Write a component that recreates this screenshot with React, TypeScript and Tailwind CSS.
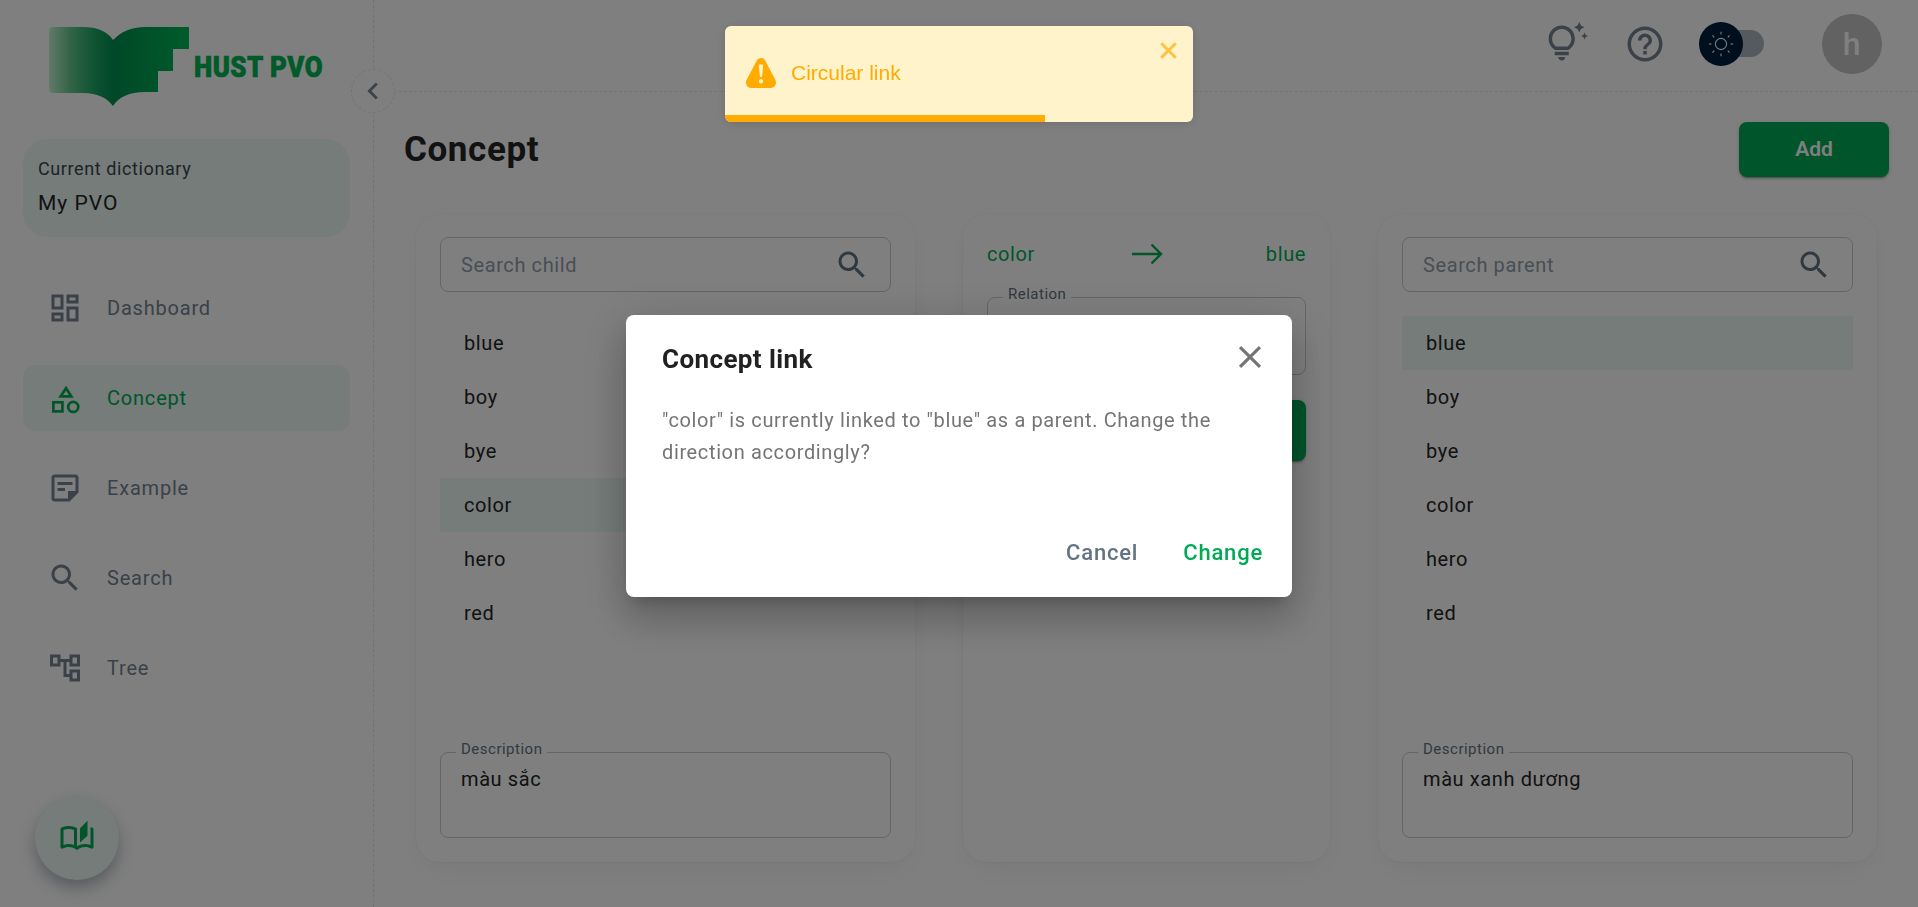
import type { ReactNode } from 'react'

const ICONS = {
  dashboard: 'M19 5v2h-4V5h4M9 5v6H5V5h4m10 8v6h-4v-6h4M9 17v2H5v-2h4M21 3h-8v6h8V3zM11 3H3v10h8V3zm10 8h-8v10h8V11zm-10 4H3v6h8v-6z',
  note: 'M19 5v9l-5 0 0 5H5V5H19 M19 3H5C3.9 3 3 3.9 3 5v14c0 1.1.9 2 2 2h10l6-6V5C21 3.9 20.1 3 19 3z M12 14H7v-2h5V14z M17 10H7V8h10V10z',
  search: 'M15.5 14h-.79l-.28-.27C15.41 12.59 16 11.11 16 9.5 16 5.91 13.09 3 9.5 3S3 5.91 3 9.5 5.91 16 9.5 16c1.61 0 3.09-.59 4.23-1.57l.27.28v.79l5 4.99L20.49 19l-4.99-5zm-6 0C7.01 14 5 11.99 5 9.5S7.01 5 9.5 5 14 7.01 14 9.5 11.99 14 9.5 14z',
  tree: 'M22 11V3h-7v3H9V3H2v8h7V8h2v10h4v3h7v-8h-7v3h-2V8h2v3h7zM7 9H4V5h3v4zm10 6h3v4h-3v-4zm0-10h3v4h-3V5z',
  close: 'M19 6.41 17.59 5 12 10.59 6.41 5 5 6.41 10.59 12 5 17.59 6.41 19 12 13.41 17.59 19 19 17.59 13.41 12z',
  chevron: 'M15.41 7.41 14 6l-6 6 6 6 1.41-1.41L10.83 12z',
  help: 'M11 18h2v-2h-2v2zm1-16C6.48 2 2 6.48 2 12s4.48 10 10 10 10-4.48 10-10S17.52 2 12 2zm0 18c-4.41 0-8-3.59-8-8s3.59-8 8-8 8 3.59 8 8-3.59 8-8 8zm0-14c-2.21 0-4 1.79-4 4h2c0-1.1.9-2 2-2s2 .9 2 2c0 2-3 1.75-3 5h2c0-2.25 3-2.5 3-5 0-2.21-1.79-4-4-4z',
  tips: 'M7 20h4c0 1.1-.9 2-2 2s-2-.9-2-2zm-2-1h8v-2H5v2zm11.5-9.5c0 3.82-2.66 5.86-3.77 6.5H5.27c-1.11-.64-3.77-2.68-3.77-6.5C1.5 5.36 4.86 2 9 2s7.5 3.36 7.5 7.5zm-2 0C14.5 6.47 12.03 4 9 4S3.5 6.47 3.5 9.5c0 2.47 1.49 3.89 2.35 4.5h6.3c.86-.61 2.35-2.03 2.35-4.5zm6.87-2.13L20 8l1.37.63L22 10l.63-1.37L24 8l-1.37-.63L22 6l-.63 1.37zM19 6l.94-2.06L22 3l-2.06-.94L19 0l-.94 2.06L16 3l2.06.94L19 6z',
  stories: 'M22.47 5.2C22 4.96 21.51 4.76 21 4.59v12.03C19.86 16.21 18.69 16 17.5 16c-1.9 0-3.78.54-5.5 1.58V5.48C10.38 4.55 8.51 4 6.5 4 4.71 4 3.02 4.44 1.53 5.2 1.2 5.36 1 5.71 1 6.08v12.08c0 .58.47.99 1 .99.16 0 .32-.04.48-.12C3.69 18.4 5.05 18 6.5 18c2.07 0 3.98.82 5.5 2 1.52-1.18 3.43-2 5.5-2 1.45 0 2.81.4 4.02 1.04.16.08.32.12.48.12.52 0 1-.41 1-.99V6.08c0-.37-.2-.72-.53-.88zM10 16.62C8.86 16.21 7.69 16 6.5 16c-1.19 0-2.36.21-3.5.62V6.71C4.11 6.24 5.28 6 6.5 6c1.2 0 2.39.25 3.5.72v9.9zM19 .5l-5 5V15l5-4.5V.5z',
  warning: 'M23.32 17.191L15.438 2.184C14.728.833 13.416 0 11.996 0c-1.42 0-2.733.833-3.443 2.184L.533 17.448a4.744 4.744 0 000 4.368C1.243 23.167 2.555 24 3.975 24h16.05C22.22 24 24 22.044 24 19.632c0-.904-.251-1.746-.68-2.44zm-9.622 1.46c0 1.033-.724 1.823-1.698 1.823s-1.698-.79-1.698-1.822v-.043c0-1.028.724-1.822 1.698-1.822s1.698.79 1.698 1.822v.043zm.039-12.285l-.84 8.06c-.057.581-.408.943-.897.943-.49 0-.84-.367-.896-.942l-.84-8.065c-.057-.624.25-1.095.779-1.095h1.91c.528.005.84.476.784 1.1z',
}

function MuiIcon({ d, className }: { d: string; className?: string }) {
  return (
    <svg viewBox="0 0 24 24" fill="currentColor" className={className}>
      <path d={d} />
    </svg>
  )
}

function ShapesIcon() {
  return (
    <svg viewBox="0 0 29 29" fill="none" stroke="currentColor" strokeWidth="2.8" className="w-[29px] h-[29px] mt-[2px] ml-[2px]">
      <path d="M14.5 2.8 20 11.2H9Z" />
      <rect x="1.4" y="17.4" width="9.4" height="9.4" />
      <circle cx="22" cy="22.2" r="5.2" />
    </svg>
  )
}

function SunIcon() {
  const rays = [0, 45, 90, 135, 180, 225, 270, 315]
  return (
    <svg viewBox="-12 -12 24 24" fill="none" stroke="currentColor" strokeWidth="1" className="w-[26px] h-[26px]">
      <circle r="5.2" />
      {rays.map(a => (
        <line key={a} x1="0" y1="-8.8" x2="0" y2="-11.2" transform={`rotate(${a})`} />
      ))}
    </svg>
  )
}

function Logo() {
  return (
    <svg viewBox="0 0 280 84" className="w-[280px] h-[84px]">
      <defs>
        <linearGradient id="pageLeft" x1="0" x2="1" y1="0" y2="0">
          <stop offset="0" stopColor="#c4f4d2" />
          <stop offset="0.33" stopColor="#68c890" />
          <stop offset="0.7" stopColor="#1ea865" />
          <stop offset="1" stopColor="#009050" />
        </linearGradient>
        <linearGradient id="pageRight" x1="0" x2="1" y1="0" y2="0">
          <stop offset="0" stopColor="#009050" />
          <stop offset="1" stopColor="#00b854" />
        </linearGradient>
      </defs>
      <path d="M4 0H34C48 0 58 4 64 13V79C58 71 48 66 34 66H4C2 66 0 64 0 62V4C0 2 2 0 4 0Z" fill="url(#pageLeft)" />
      <path d="M64 13C72 5 82 0 96 0H140V22H124V44H109V65H96C80 65 70 70 64 79Z" fill="url(#pageRight)" />
      <text x="145" y="50" textLength="129" lengthAdjust="spacingAndGlyphs" fontFamily="Roboto, sans-serif" fontWeight="900" fontSize="30" fill="#00b455" stroke="#00b455" strokeWidth="0.7">
        HUST PVO
      </text>
    </svg>
  )
}

function NavItem({ label, icon, active }: { label: string; icon: ReactNode; active?: boolean }) {
  return (
    <div className={`flex items-center h-[66px] mb-[24px] pl-[27px] rounded-[12px] ${active ? 'bg-[#ebf8f2] text-[#00ab55]' : 'text-[#748291]'}`}>
      <span className="w-[30px] h-[30px] mr-[27px] flex items-center justify-center">{icon}</span>
      <span className="text-[20px] tracking-[0.8px]">{label}</span>
    </div>
  )
}

function Sidebar() {
  const navIcon = 'w-[36px] h-[36px] shrink-0'
  return (
    <aside className="relative w-[374px] shrink-0 h-full border-r border-dashed border-[#e3e7ea] px-[23px]">
      <div className="ml-[26px] mt-[27px] h-[84px]">
        <Logo />
      </div>
      <div className="mt-[28px] h-[98px] rounded-[24px] bg-[#ebf8f2] px-[15px] pt-[18px]">
        <div className="text-[18px] leading-[24px] tracking-[0.6px] text-[#3b4650]">Current dictionary</div>
        <div className="mt-[9px] text-[21px] leading-[26px] tracking-[1px] text-[#242424]">My PVO</div>
      </div>
      <nav className="mt-[38px]">
        <NavItem label="Dashboard" icon={<MuiIcon d={ICONS.dashboard} className={navIcon} />} />
        <NavItem label="Concept" active icon={<ShapesIcon />} />
        <NavItem label="Example" icon={<MuiIcon d={ICONS.note} className={navIcon} />} />
        <NavItem label="Search" icon={<MuiIcon d={ICONS.search} className={navIcon} />} />
        <NavItem label="Tree" icon={<MuiIcon d={ICONS.tree} className={navIcon} />} />
      </nav>
      <button className="absolute left-[35px] top-[796px] w-[84px] h-[84px] rounded-full bg-[#ebf8f2] text-[#00ab55] flex items-center justify-center shadow-[0_8px_16px_0_rgba(99,115,129,0.5)]">
        <MuiIcon d={ICONS.stories} className="w-[36px] h-[36px]" />
      </button>
      <button className="absolute left-[351px] top-[69px] w-[44px] h-[44px] rounded-full bg-white border border-dashed border-[#e3e7ea] text-[#7a8691] flex items-center justify-center z-10">
        <MuiIcon d={ICONS.chevron} className="w-[34px] h-[34px]" />
      </button>
    </aside>
  )
}

function Header() {
  return (
    <header className="h-[92px] shrink-0 border-b border-dashed border-[#e3e7ea] flex items-start justify-end pt-[14px] pr-[36px] text-[#748291]">
      <MuiIcon d={ICONS.tips} className="w-[42px] h-[42px] mt-[8px] mr-[36px]" />
      <MuiIcon d={ICONS.help} className="w-[42px] h-[42px] mt-[9px] mr-[33px]" />
      <div className="relative w-[76px] h-[60px] mr-[47px]">
        <div className="absolute left-[24px] top-[16px] w-[41px] h-[27px] rounded-full bg-[#aab4be]" />
        <div className="absolute left-0 top-[8px] w-[44px] h-[44px] rounded-full bg-[#001e3c] flex items-center justify-center text-white">
          <SunIcon />
        </div>
      </div>
      <div className="w-[60px] h-[60px] rounded-full bg-[#c4c4c4] text-white flex items-center justify-center text-[32px] font-medium">h</div>
    </header>
  )
}

function OutlinedBox({ label, value, heightClass }: { label: string; value?: string; heightClass: string }) {
  return (
    <fieldset className={`border border-[#c4cdd5] rounded-[8px] px-[20px] ${heightClass}`}>
      <legend className="ml-[-5px] px-[5px] pb-[5px] text-[15px] leading-[15px] tracking-[0.5px] text-[#637381]">{label}</legend>
      {value && <div className="pt-[5px] text-[20px] leading-[24px] text-[#242424]">{value}</div>}
    </fieldset>
  )
}

const CARD_SHADOW = 'shadow-[0_0_2px_0_rgba(145,158,171,0.2),0_12px_24px_-4px_rgba(145,158,171,0.12)]'

function ConceptColumn({ placeholder, selected, description }: { placeholder: string; selected: string; description: string }) {
  const words = ['blue', 'boy', 'bye', 'color', 'hero', 'red']
  return (
    <section className={`w-[499px] h-[648px] rounded-[24px] p-[24px] pt-[23px] flex flex-col ${CARD_SHADOW}`}>
      <div className="h-[55px] shrink-0 border border-[#c4cdd5] rounded-[8px] flex items-center justify-between pl-[20px] pr-[20px]">
        <span className="text-[20px] text-[#919eab]">{placeholder}</span>
        <MuiIcon d={ICONS.search} className="w-[36px] h-[36px] text-[#637381]" />
      </div>
      <div className="mt-[24px]">
        {words.map(w => (
          <div key={w} className={`h-[54px] flex items-center pl-[24px] pb-[1px] text-[20px] text-[#242424] ${w === selected ? 'bg-[#ebf8f2]' : ''}`}>
            {w}
          </div>
        ))}
      </div>
      <div className="mt-auto">
        <OutlinedBox label="Description" value={description} heightClass="h-[96px]" />
      </div>
    </section>
  )
}

function LinkColumn() {
  return (
    <section className={`w-[367px] h-[648px] rounded-[24px] px-[24px] pt-[25px] ${CARD_SHADOW}`}>
      <div className="flex items-center justify-between h-[30px] text-[20px] text-[#00ab55]">
        <span>color</span>
        <svg viewBox="0 0 32 22" fill="none" stroke="currentColor" strokeWidth="2.4" className="w-[32px] h-[22px] mr-[7px]">
          <path d="M1 11H30M20.5 1.5 30 11 20.5 20.5" />
        </svg>
        <span>blue</span>
      </div>
      <div className="mt-[18px]">
        <OutlinedBox label="Relation" heightClass="h-[88px]" />
      </div>
      <button className="mt-[25px] w-full h-[61px] rounded-[8px] bg-[#00ab55] text-white text-[20px] font-medium shadow-[0_3px_1px_-2px_rgba(0,0,0,0.2),0_2px_2px_0_rgba(0,0,0,0.14),0_1px_5px_0_rgba(0,0,0,0.12)]">
        Link
      </button>
    </section>
  )
}

function Overlay() {
  return (
    <div className="fixed inset-0 z-50 bg-black/50 flex items-center justify-center pt-[5px]">
      {/* toast */}
      <div className="absolute top-[26px] left-1/2 -translate-x-1/2 w-[468px] h-[96px] rounded-[6px] bg-[#fff3cc] shadow-[0_1px_10px_0_rgba(0,0,0,0.1),0_2px_15px_0_rgba(0,0,0,0.05)] overflow-hidden font-['Liberation_Sans',sans-serif] tracking-normal">
        <div className="flex items-center h-[96px] pl-[21px] pb-[2px] text-[#ffab00]">
          <MuiIcon d={ICONS.warning} className="w-[30px] h-[30px] mr-[15px]" />
          <span className="text-[21px]">Circular link</span>
        </div>
        <MuiIcon d={ICONS.close} className="absolute top-[11px] right-[11px] w-[27px] h-[27px] text-[#ffab00] opacity-70 stroke-current stroke-[0.8]" />
        <div className="absolute left-0 bottom-0 h-[7px] w-[320px] bg-[#ffab00]" />
      </div>

      {/* dialog */}
      <div className="relative w-[666px] h-[282px] rounded-[8px] bg-white px-[36px] shadow-[0_11px_15px_-7px_rgba(0,0,0,0.2),0_24px_38px_3px_rgba(0,0,0,0.14),0_9px_46px_8px_rgba(0,0,0,0.12)]">
        <h2 className="pt-[28px] text-[26px] leading-[32px] font-bold tracking-[0.4px] text-[#212121]">Concept link</h2>
        <MuiIcon d={ICONS.close} className="absolute top-[23px] right-[23px] w-[38px] h-[38px] text-[#757575]" />
        <p className="mt-[29px] text-[20px] leading-[32px] tracking-[0.63px] text-[#757575]">
          "color" is currently linked to "blue" as a parent. Change the direction accordingly?
        </p>
        <div className="absolute right-[29px] bottom-[29px] flex gap-[45px] text-[22px] font-medium leading-[30px] tracking-[0.8px]">
          <span className="text-[#637381]">Cancel</span>
          <span className="text-[#00ab55]">Change</span>
        </div>
      </div>
    </div>
  )
}

export default function App() {
  return (
    <div className="font-['Roboto',sans-serif] tracking-[0.6px] relative flex w-full h-[907px] overflow-hidden bg-white">
      <Sidebar />
      <main className="flex-1 min-w-0 flex flex-col">
        <Header />
        <div className="flex items-start justify-between pl-[30px] pr-[29px] pt-[30px]">
          <h1 className="text-[35px] leading-[44px] font-bold text-[#242424] mt-[6px]">Concept</h1>
          <button className="w-[150px] h-[55px] rounded-[8px] bg-[#00ab55] text-white text-[21px] font-semibold tracking-normal shadow-[0_3px_1px_-2px_rgba(0,0,0,0.2),0_2px_2px_0_rgba(0,0,0,0.14),0_1px_5px_0_rgba(0,0,0,0.12)]">
            Add
          </button>
        </div>
        <div className="flex gap-[48px] pl-[42px] mt-[37px]">
          <ConceptColumn placeholder="Search child" selected="color" description="màu sắc" />
          <LinkColumn />
          <ConceptColumn placeholder="Search parent" selected="blue" description="màu xanh dương" />
        </div>
      </main>
      <Overlay />
    </div>
  )
}
